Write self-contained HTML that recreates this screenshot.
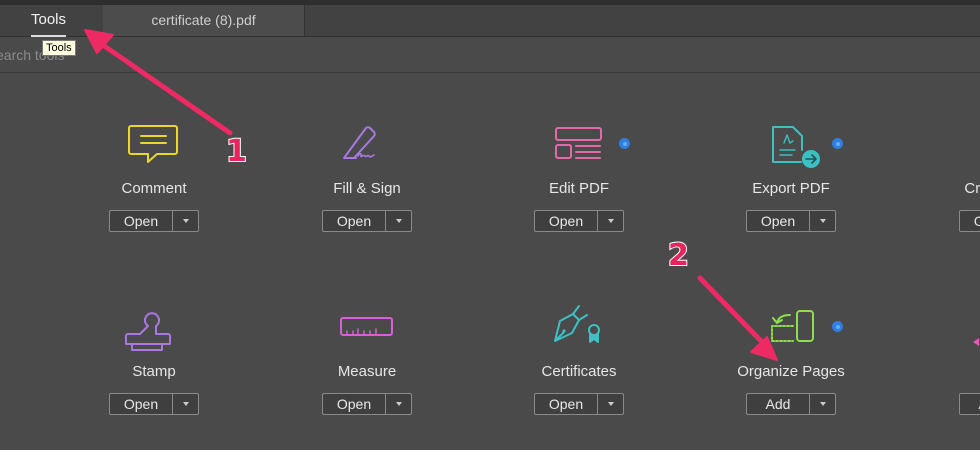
<!DOCTYPE html>
<html><head><meta charset="utf-8"><style>
html,body{margin:0;width:980px;height:450px;overflow:hidden}
body{background:#4a4a4a;font-family:"Liberation Sans",sans-serif;position:relative}
#wrap{position:absolute;left:0;top:0;width:980px;height:450px;overflow:hidden}
.menu{position:absolute;left:0;top:0;width:980px;height:5px;background:#2e2e2e}
.tabs{position:absolute;left:0;top:5px;width:980px;height:31px;background:#424242;border-bottom:1px solid #2f2f2f}
.tab1{position:absolute;left:31px;top:6px;color:#f2f2f2;font-size:15px}
.tab1:after{content:"";position:absolute;left:0;right:0;top:24px;height:2px;background:#ddd}
.tab2{position:absolute;left:103px;top:0;width:201px;height:31px;background:#4c4c4c;border-right:1px solid #333;color:#cfcfcf;font-size:14px;text-align:center;line-height:31px}
.search{position:absolute;left:0;top:37px;width:980px;height:35px;background:#4a4a4a;border-bottom:1px solid #3a3a3a}
.search span{position:absolute;left:-4px;top:10px;color:#8a8a8a;font-size:14px}
.tip{position:absolute;left:42px;top:40px;background:#ffffe1;border:1px solid #777;font-size:11px;padding:1px 3px;color:#000}
.tool{position:absolute;width:160px;height:60px;text-align:center}
.tool .lbl{position:absolute;top:0;left:0;width:160px;color:#e6e6e6;font-size:15px}
.btn{position:absolute;left:35px;top:30px;width:88px;height:20px;border:1px solid #8a8a8a;border-radius:2px;background:#3f3f3f;color:#e8e8e8;font-size:14px}
.btn .t{position:absolute;left:0;width:62px;top:2px;text-align:center}
.btn .d{position:absolute;left:62px;top:0;width:26px;height:20px;border-left:1px solid #8a8a8a}
.btn .d:after{content:"";position:absolute;left:10px;top:8px;border:3px solid transparent;border-top:4px solid #ccc}
svg.ic{position:absolute}
.star{position:absolute;width:9px;height:9px;border-radius:50%;background:#2f7fe0;border:1px solid #2f7fe0}
.star:after{content:"";position:absolute;left:2.5px;top:2.5px;width:4px;height:4px;background:#6aa8f0;border-radius:50%}
.num{position:absolute;font-family:"DejaVu Sans",sans-serif;font-size:30px;font-weight:bold;color:#e8245e;-webkit-text-stroke:2px #fff;paint-order:stroke fill}
</style></head><body><div id="wrap">
<div class="menu"></div>
<div class="tabs"><div class="tab1">Tools</div><div class="tab2">certificate (8).pdf</div></div>
<div class="search"><span>earch tools</span></div>
<div class="tip">Tools</div>

<svg class="ic" style="left:0;top:0" width="980" height="450" fill="none" stroke-width="2" stroke-linecap="round" stroke-linejoin="round">
<path d="M131 126h44a2 2 0 0 1 2 2v24a2 2 0 0 1-2 2h-18l-9 8v-8h-17a2 2 0 0 1-2-2v-24a2 2 0 0 1 2-2z" stroke="#e8d82c"/>
<path d="M141 136h25M141 143h25" stroke="#e8d82c"/>
<path d="M344 158l22-30a3 3 0 0 1 4 0l4 4a3 3 0 0 1 0 4l-20 22z M344 158h12" stroke="#a879e0"/>
<path d="M358 156c2-4 4-2 3 0s3-2 4 0 3-2 4 0 3 0 5-1" stroke="#a879e0" stroke-width="1.6"/>
<rect x="556" y="128" width="45" height="12" rx="2" stroke="#e26aa8"/>
<rect x="556" y="145" width="15" height="13" rx="2" stroke="#e26aa8"/>
<path d="M576 146h24M576 152h24M576 158h24" stroke="#e26aa8"/>
<path d="M801 162h-28v-35h20l9 9v14" stroke="#3cc0c4"/>
<path d="M780 150h15M780 155h12M784 143l3-8 3 8 3-2" stroke="#3cc0c4" stroke-width="1.4"/>
<circle cx="811" cy="159" r="8" fill="#3cc0c4" stroke="#3cc0c4"/>
<path d="M806 159h9M812 155l4 4-4 4" stroke="#2a4f50" stroke-width="1.6"/>
<path d="M148 326a7 7 0 1 1 8 0v8h12a2 2 0 0 1 2 2v8h-44v-8a2 2 0 0 1 2-2h12z" stroke="#a879e0"/>
<path d="M132 344v6h30v-6" stroke="#a879e0"/>
<rect x="341" y="318" width="51" height="17" rx="2" stroke="#d95ed8"/>
<path d="M347 335v-4M353 335v-4M358 335v-6M364 335v-4M370 335v-4M376 335v-6" stroke="#d95ed8" stroke-width="1.4"/>
<path d="M555 341l5-20 13-7 6 6-7 13z M555 341l9-9M573 314l6-8M579 320l8-5" stroke="#3cc0c4"/>
<circle cx="564" cy="331" r="1.6" fill="#3cc0c4" stroke="none"/>
<circle cx="594" cy="330" r="5" stroke="#3cc0c4"/>
<path d="M590 334v8l4-3 4 3v-8" fill="#3cc0c4" stroke="#3cc0c4"/>
<rect x="797" y="311" width="16" height="30" rx="3" stroke="#8ee04a"/>
<path d="M793 326h-21v15h21" stroke="#8ee04a" stroke-dasharray="2 2"/>
<path d="M790 315c-8 0-12 3-13 8M773 318l4 5 5-3" stroke="#8ee04a"/>
<path d="M230 133L100 43" stroke="#ee2a64" stroke-width="5"/>
<path d="M85 30l28 5-16 18z" fill="#ee2a64" stroke="#ee2a64"/>
<path d="M700 278l60 62" stroke="#ee2a64" stroke-width="5"/>
<path d="M777 360l-26-8 16-15z" fill="#ee2a64" stroke="#ee2a64"/>
<path d="M973 342l6-4v8z" fill="#e05ac0" stroke="none"/>
</svg>
<div class="star" style="left:619px;top:138px"></div>
<div class="star" style="left:832px;top:138px"></div>
<div class="star" style="left:832px;top:321px"></div>
<div class="num" style="left:226px;top:134px">1</div>
<div class="num" style="left:668px;top:238px">2</div>

<div class="tool" style="left:74px;top:180px"><div class="lbl">Comment</div><div class="btn"><span class="t">Open</span><span class="d"></span></div></div>
<div class="tool" style="left:287px;top:180px"><div class="lbl">Fill &amp; Sign</div><div class="btn"><span class="t">Open</span><span class="d"></span></div></div>
<div class="tool" style="left:499px;top:180px"><div class="lbl">Edit PDF</div><div class="btn"><span class="t">Open</span><span class="d"></span></div></div>
<div class="tool" style="left:711px;top:180px"><div class="lbl">Export PDF</div><div class="btn"><span class="t">Open</span><span class="d"></span></div></div>
<div class="tool" style="left:924px;top:180px;width:56px;overflow:hidden"><div class="lbl">Create PDF</div><div class="btn"><span class="t">Open</span><span class="d"></span></div></div>
<div class="tool" style="left:74px;top:363px"><div class="lbl">Stamp</div><div class="btn"><span class="t">Open</span><span class="d"></span></div></div>
<div class="tool" style="left:287px;top:363px"><div class="lbl">Measure</div><div class="btn"><span class="t">Open</span><span class="d"></span></div></div>
<div class="tool" style="left:499px;top:363px"><div class="lbl">Certificates</div><div class="btn"><span class="t">Open</span><span class="d"></span></div></div>
<div class="tool" style="left:711px;top:363px"><div class="lbl">Organize Pages</div><div class="btn"><span class="t">Add</span><span class="d"></span></div></div>
<div class="tool" style="left:924px;top:363px;width:56px;overflow:hidden"><div class="lbl">Print</div><div class="btn"><span class="t">Add</span><span class="d"></span></div></div>
</div></body></html>
